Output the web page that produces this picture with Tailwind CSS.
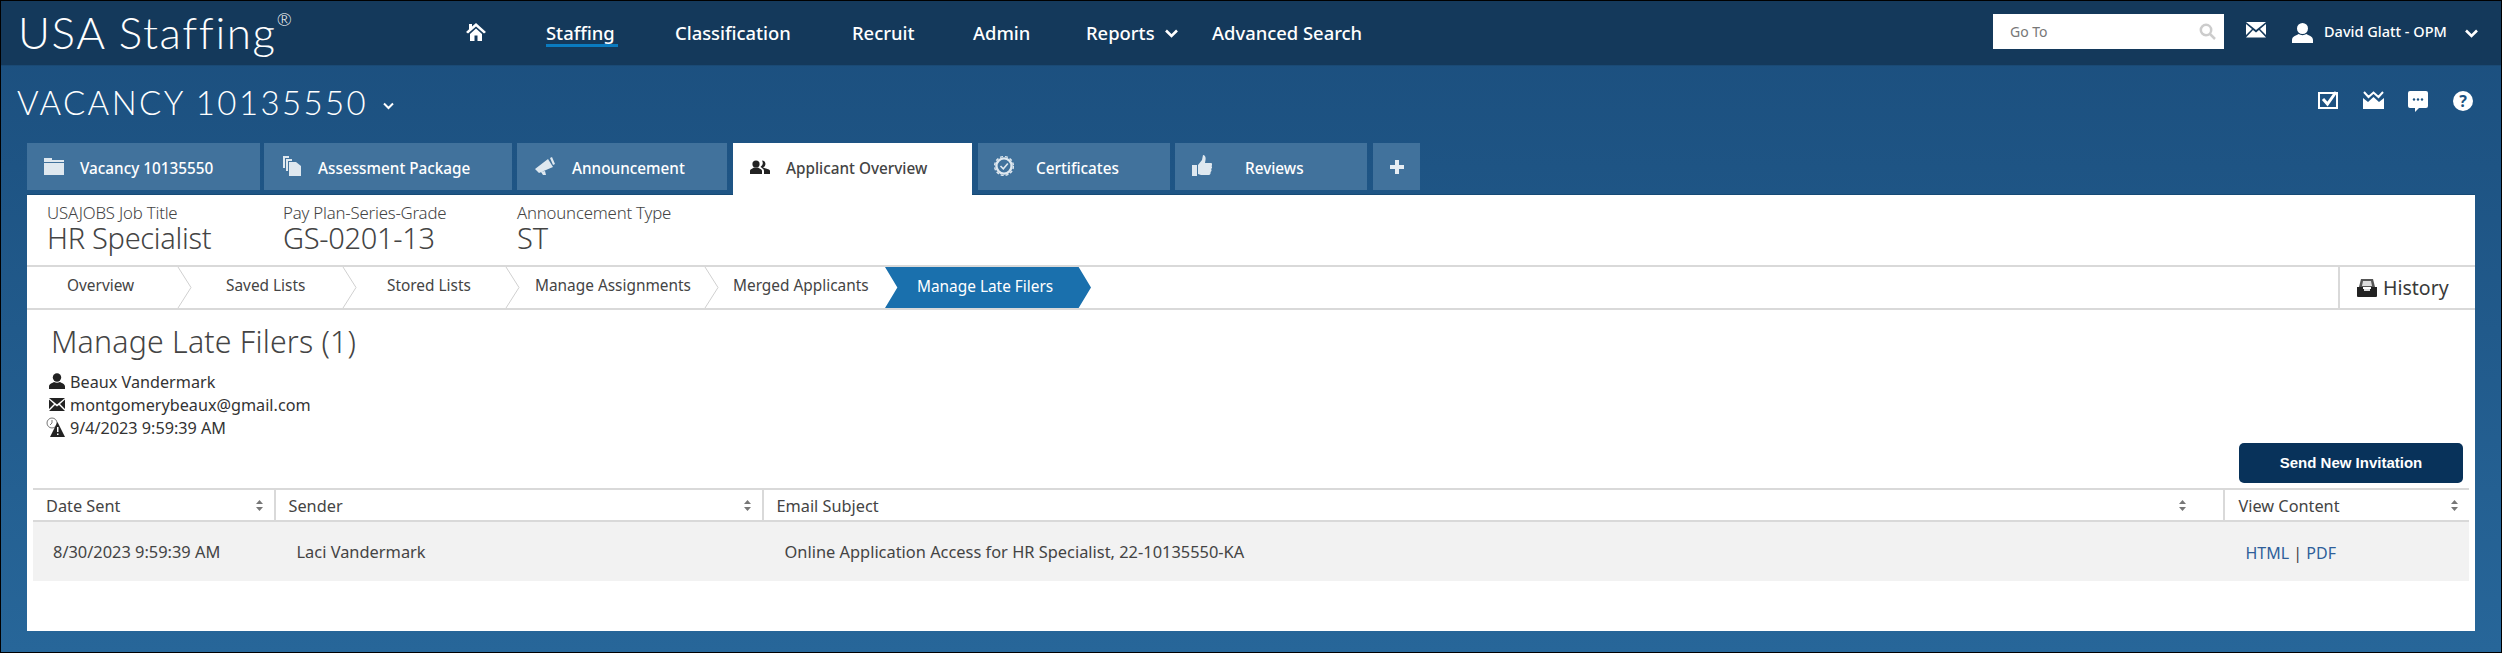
<!DOCTYPE html>
<html lang="en">
  <head>
    <meta charset="UTF-8" />
    <title>Manage Late Filers</title>
    <script src="https://cdn.jsdelivr.net/npm/@tailwindcss/browser@4"></script>
  </head>
  <body class="bg-black overflow-hidden font-['Noto_Sans','Open_Sans',sans-serif] text-[#444]">
    <div class="w-[2502px] h-[653px] border border-black flex flex-col bg-linear-to-b from-[#1b4e7d] to-[#276699]">
      <!-- top nav -->
      <header class="h-[65px] shrink-0 flex items-center bg-[#14395b] border-b border-[#1a4a75] text-white text-[18.4px] font-medium">
        <div class="ml-[17px] w-[448px] text-[44px] leading-none font-['Lato',sans-serif] font-light tracking-[1.6px] -mt-[3px] whitespace-nowrap">USA Staffing<sup class="text-[18px] align-[14px]">®</sup></div>
        <svg class="w-[20px] h-[18px] -mt-[3px]" viewBox="0 0 20 18" fill="#fff"><path d="M10 0 L20 9 L18 10.5 L10 3.5 L2 10.5 L0 9 L3 6.3 V1 H6 V3.6 Z M4 11 L10 5.6 L16 11 V18 H11.5 V12.5 H8.5 V18 H4 Z"/></svg>
        <div class="ml-[60px] w-[72px] relative -mt-[1px]">Staffing<span class="absolute left-0 top-[25px] w-[72px] h-[3px] bg-[#0a7bc0]"></span></div>
        <div class="ml-[57px] w-[119px] -mt-[1px]">Classification</div>
        <div class="ml-[58px] w-[64px] -mt-[1px]">Recruit</div>
        <div class="ml-[57px] w-[55px] -mt-[1px]">Admin</div>
        <div class="ml-[58px] w-[69px] -mt-[1px]">Reports</div>
        <svg class="ml-[10px] w-[13px] h-[9px]" viewBox="0 0 13 9" fill="none" stroke="#fff" stroke-width="2.6"><path d="M1 1.5 L6.5 7 L12 1.5"/></svg>
        <div class="ml-[34px] w-[150px] -mt-[1px] whitespace-nowrap">Advanced Search</div>
        <div class="ml-[631px] w-[231px] h-[35px] -mt-[3px] bg-white flex items-center justify-between pl-[17px] pr-[8px] text-[14px] font-normal text-[#777]">
          <span>Go To</span>
          <svg class="w-[17px] h-[17px]" viewBox="0 0 17 17" fill="none" stroke="#ccc" stroke-width="2.5"><circle cx="7" cy="7" r="5.2"/><path d="M11 11 L16 16"/></svg>
        </div>
        <svg class="ml-[22px] w-[20px] h-[16px] -mt-[7px]" viewBox="0 0 20 16" fill="#fff"><path d="M0 0 H20 L10 8 Z M0 2 L6 7 L0 13 Z M20 2 L14 7 L20 13 Z M7 8 L10 10.4 L13 8 L20 15.5 H0 Z"/></svg>
        <svg class="ml-[26px] w-[21px] h-[20px] -mt-[1px]" viewBox="0 0 21 20" fill="#fff"><ellipse cx="10.5" cy="5.5" rx="5.5" ry="5.5"/><path d="M0 20 V17 C0 13 5 12.5 6.5 11 C9 12.5 12 12.5 14.5 11 C16 12.5 21 13 21 17 V20 Z"/></svg>
        <div class="ml-[11px] w-[130px] -mt-[2px] text-[14.5px] whitespace-nowrap">David Glatt - OPM</div>
        <svg class="ml-[11px] w-[13px] h-[9px]" viewBox="0 0 13 9" fill="none" stroke="#fff" stroke-width="2.6"><path d="M1 1.5 L6.5 7 L12 1.5"/></svg>
      </header>

      <!-- vacancy title row -->
      <div class="h-[77px] shrink-0 flex items-start text-white">
        <h1 class="ml-[16px] mt-[14px] text-[33px] leading-[44px] font-['Lato',sans-serif] font-light tracking-[2.4px] whitespace-nowrap w-[349px]">VACANCY 10135550</h1>
        <svg class="ml-[17px] mt-[36px] w-[11px] h-[8px]" viewBox="0 0 11 8" fill="none" stroke="#fff" stroke-width="2"><path d="M1 1.5 L5.5 6 L10 1.5"/></svg>
        <svg class="ml-[1924px] mt-[25px] w-[21px] h-[18px]" viewBox="0 0 21 18" fill="none" stroke="#fff" stroke-width="2"><path d="M1 2 H19 V17 H1 Z"/><path d="M5 8 L9.5 13 L18 1" stroke-width="3"/></svg>
        <svg class="ml-[24px] mt-[25px] w-[21px] h-[18px]" viewBox="0 0 21 18" fill="#fff"><path d="M0 7 L5 11 L10.5 6 L16 11 L21 7 V18 H0 Z"/><path d="M1 1 L5.5 6 L10.5 1.5 L15.5 6 L20 1" fill="none" stroke="#fff" stroke-width="2"/></svg>
        <svg class="ml-[24px] mt-[25px] w-[20px] h-[22px]" viewBox="0 0 20 22" fill="#fff"><path d="M2 0 H18 A2 2 0 0 1 20 2 V15 A2 2 0 0 1 18 17 H11 L7 21 V17 H2 A2 2 0 0 1 0 15 V2 A2 2 0 0 1 2 0 Z"/><g fill="#1c5381"><circle cx="6" cy="8.5" r="1.2"/><circle cx="10" cy="8.5" r="1.2"/><circle cx="14" cy="8.5" r="1.2"/></g></svg>
        <div class="ml-[25px] mt-[25px] w-[20px] h-[20px] rounded-full bg-white text-[#1c5381] text-[16px] leading-[20px] font-bold text-center">?</div>
      </div>

      <!-- tabs -->
      <div class="h-[52px] shrink-0 flex items-stretch ml-[26px] w-[2448px] border-b border-[#164a75] text-[15.3px] font-medium text-white">
        <div class="w-[233px] h-[47px] bg-[#41729c] flex items-center pl-[17px] pt-[3px]">
          <svg class="w-[20px] h-[18px] -mt-[4px]" viewBox="0 0 20 18" fill="#dfe8ef"><path d="M0 1 H8 V3 H20 V5 H0 Z M0 6 H20 V18 H0 Z"/></svg>
          <span class="ml-[16px]">Vacancy 10135550</span>
        </div>
        <div class="ml-[4px] w-[248px] h-[47px] bg-[#41729c] flex items-center pl-[19px] pt-[3px]">
          <svg class="w-[18px] h-[20px] -mt-[4px]" viewBox="0 0 18 20" fill="#dfe8ef"><path d="M0 0 H6 V2 H2 V12 H0 Z M3 3 H9 V5 H5 V15 H3 Z M6 6 H13 L18 10 V20 H6 Z"/></svg>
          <span class="ml-[17px]">Assessment Package</span>
        </div>
        <div class="ml-[5px] w-[210px] h-[47px] bg-[#41729c] flex items-center pl-[18px] pt-[3px]">
          <svg class="w-[20px] h-[18px] -mt-[4px]" viewBox="0 0 20 18" fill="#dfe8ef"><path d="M0 12 L13 2 L18 10 L4 16 Z M6 15 L10 14 L11 18 L8 18 Z M15 1 L17 0 L20 7 L18 8 Z"/></svg>
          <span class="ml-[17px]">Announcement</span>
        </div>
        <div class="ml-[6px] w-[239px] h-[52px] -mb-px bg-white flex items-center pl-[17px] pb-[2px] text-[#444] z-10">
          <svg class="w-[20px] h-[14px] -mt-[2px]" viewBox="0 0 20 14" fill="#222"><circle cx="6" cy="4" r="3.6"/><path d="M0 14 V11 C0 9 3 8.5 4 7.5 H8 C9 8.5 12 9 12 11 V14 Z"/><path d="M12 0.5 A3.6 3.6 0 0 1 13 7.5 C15 8.5 20 9 20 11 V14 H14 V11 C14 9 12 8 10.5 7 A5 5 0 0 0 12 0.5 Z"/></svg>
          <span class="ml-[16px]">Applicant Overview</span>
        </div>
        <div class="ml-[6px] w-[192px] h-[47px] bg-[#41729c] flex items-center pl-[16px] pt-[3px]">
          <svg class="w-[20px] h-[22px] -mt-[4px]" viewBox="0 0 20 22" fill="none" stroke="#dfe8ef"><circle cx="10" cy="11" r="7.6" stroke-width="2.4"/><circle cx="10" cy="11" r="9.4" stroke-width="1.4" stroke-dasharray="3 2"/><path d="M6.5 11 L9.3 13.8 L13.8 8.5" stroke-width="1.6"/></svg>
          <span class="ml-[22px]">Certificates</span>
        </div>
        <div class="ml-[5px] w-[192px] h-[47px] bg-[#41729c] flex items-center pl-[17px] pt-[3px]">
          <svg class="w-[20px] h-[22px] -mt-[4px]" viewBox="0 0 20 22" fill="#dfe8ef"><path d="M0 10 H5 V21 H0 Z M6 10 L10 5 L11 0 C13 0 14 2 13.5 5 L13 8 H19 C20.5 8 20.5 10 19.5 11 C20.5 12 20 13.5 19 14 C20 15 19.5 16.5 18.5 17 C19 18.5 18 20 17 20 H9 L6 19 Z"/></svg>
          <span class="ml-[33px]">Reviews</span>
        </div>
        <div class="ml-[6px] w-[47px] h-[47px] bg-[#41729c] flex items-center justify-center">
          <svg class="w-[14px] h-[14px]" viewBox="0 0 14 14" fill="#e6edf3"><path d="M5 0 H9 V5 H14 V9 H9 V14 H5 V9 H0 V5 H5 Z"/></svg>
        </div>
      </div>

      <!-- white panel -->
      <main class="ml-[26px] w-[2448px] h-[436px] shrink-0 bg-white flex flex-col">
        <div class="h-[70px] shrink-0 flex pl-[20px] pt-[7px]">
          <div class="w-[236px]"><p class="text-[16.8px] leading-[21px] font-light tracking-[-0.2px]">USAJOBS Job Title</p><p class="text-[29px] leading-[30px] font-light tracking-[-0.3px]">HR Specialist</p></div>
          <div class="w-[234px]"><p class="text-[16.8px] leading-[21px] font-light tracking-[-0.2px]">Pay Plan-Series-Grade</p><p class="text-[29px] leading-[30px] font-light tracking-[-0.3px]">GS-0201-13</p></div>
          <div><p class="text-[16.8px] leading-[21px] font-light tracking-[-0.2px]">Announcement Type</p><p class="text-[29px] leading-[30px] font-light">ST</p></div>
        </div>

        <!-- breadcrumb steps -->
        <div class="h-[45px] shrink-0 border-y-2 border-[#d9d9d9] flex items-center text-[15.4px] relative">
          <span class="absolute left-[40px] top-[7px]">Overview</span>
          <svg class="absolute left-[150px] top-0 w-[15px] h-[41px]" viewBox="0 0 15 41" fill="none" stroke="#d0d0d0"><path d="M1 0 L14 20.5 L1 41"/></svg>
          <span class="absolute left-[199px] top-[7px]">Saved Lists</span>
          <svg class="absolute left-[315px] top-0 w-[15px] h-[41px]" viewBox="0 0 15 41" fill="none" stroke="#d0d0d0"><path d="M1 0 L14 20.5 L1 41"/></svg>
          <span class="absolute left-[360px] top-[7px]">Stored Lists</span>
          <svg class="absolute left-[478px] top-0 w-[15px] h-[41px]" viewBox="0 0 15 41" fill="none" stroke="#d0d0d0"><path d="M1 0 L14 20.5 L1 41"/></svg>
          <span class="absolute left-[508px] top-[7px]">Manage Assignments</span>
          <svg class="absolute left-[677px] top-0 w-[15px] h-[41px]" viewBox="0 0 15 41" fill="none" stroke="#d0d0d0"><path d="M1 0 L14 20.5 L1 41"/></svg>
          <span class="absolute left-[706px] top-[7px]">Merged Applicants</span>
          <div class="absolute left-[858px] top-0 w-[206px] h-[41px] bg-[#1a70ad] text-white flex items-center pl-[32px] pb-[2px] [clip-path:polygon(0_0,94%_0,100%_50%,94%_100%,0_100%,6%_50%)]">Manage Late Filers</div>
          <div class="ml-auto w-[137px] h-full border-l-2 border-[#d9d9d9] flex items-center pl-[17px] gap-[6px] text-[19.5px] text-[#3a3a3a]">
            <svg class="w-[20px] h-[19px]" viewBox="0 0 20 19"><path d="M4 1 H16 L18 9 H2 Z" fill="#555"/><path d="M6 3 H14 L15 8 H5 Z" fill="#ddd"/><path d="M0 9 H6 V11 H14 V9 H20 V18 A1 1 0 0 1 19 19 H1 A1 1 0 0 1 0 18 Z" fill="#222"/><path d="M7 11 H13 V13 H7 Z" fill="#ddd"/></svg>
            <span>History</span>
          </div>
        </div>

        <div class="relative h-[178px] shrink-0 pl-[24px] pt-[14px]">
          <h2 class="text-[30.3px] leading-[36px] font-light tracking-[0.2px]">Manage Late Filers (1)</h2>
          <div class="mt-[11px] flex flex-col text-[16.2px] leading-[23px] text-[#333]">
            <div class="flex items-center gap-[5px] -ml-[2px]">
              <svg class="w-[16px] h-[16px] -mt-[4px]" viewBox="0 0 16 16" fill="#222"><circle cx="8" cy="4.5" r="4.2"/><path d="M0 16 V13.5 C0 10.5 4 10 5 9 C7 10 9 10 11 9 C12 10 16 10.5 16 13.5 V16 Z"/></svg>
              <span>Beaux Vandermark</span>
            </div>
            <div class="flex items-center gap-[5px] -ml-[2px]">
              <svg class="w-[16px] h-[13px] -mt-[3px]" viewBox="0 0 16 13" fill="#222"><path d="M0 0 H16 L8 6.5 Z M0 1.5 L5 6 L0 11 Z M16 1.5 L11 6 L16 11 Z M6 7 L8 8.6 L10 7 L16 13 H0 Z"/></svg>
              <span>montgomerybeaux@gmail.com</span>
            </div>
            <div class="flex items-center gap-[4px] -ml-[6px]">
              <svg class="w-[21px] h-[21px] -mt-[2px]" viewBox="0 0 21 21"><circle cx="7" cy="6" r="5" fill="#fff" stroke="#777" stroke-width="1"/><path d="M7 3 V6 L5 8" fill="none" stroke="#777"/><path d="M12.5 5 L20 20 H5 Z" fill="#222"/><path d="M12 10 H13.5 V15 H12 Z M12 16.5 H13.5 V18 H12 Z" fill="#fff"/></svg>
              <span>9/4/2023 9:59:39 AM</span>
            </div>
          </div>
          <button class="absolute left-[2212px] top-[133px] w-[224px] h-[40px] rounded-[5px] bg-[#08325a] text-white text-[15px] font-bold font-['Liberation_Sans',sans-serif]">Send New Invitation</button>
        </div>

        <!-- table -->
        <div class="ml-[6px] w-[2436px] shrink-0">
          <div class="h-[34px] grid grid-cols-[242.5px_488px_1461px_244.5px] border-y-2 border-[#d9d9d9] text-[16.3px] leading-[32px]">
            <div class="relative pl-[13px] border-r-2 border-[#d9d9d9]">Date Sent<svg class="absolute right-[11px] top-[10px] w-[7px] h-[11px]" viewBox="0 0 7 11" fill="#777"><path d="M3.5 0 L7 4 H0 Z M0 7 H7 L3.5 11 Z"/></svg></div>
            <div class="relative pl-[13px] border-r-2 border-[#d9d9d9]">Sender<svg class="absolute right-[11px] top-[10px] w-[7px] h-[11px]" viewBox="0 0 7 11" fill="#777"><path d="M3.5 0 L7 4 H0 Z M0 7 H7 L3.5 11 Z"/></svg></div>
            <div class="relative pl-[13px] border-r-2 border-[#d9d9d9]">Email Subject<svg class="absolute right-[37px] top-[10px] w-[7px] h-[11px]" viewBox="0 0 7 11" fill="#777"><path d="M3.5 0 L7 4 H0 Z M0 7 H7 L3.5 11 Z"/></svg></div>
            <div class="relative pl-[14px]">View Content<svg class="absolute right-[11px] top-[10px] w-[7px] h-[11px]" viewBox="0 0 7 11" fill="#777"><path d="M3.5 0 L7 4 H0 Z M0 7 H7 L3.5 11 Z"/></svg></div>
          </div>
          <div class="h-[59px] grid grid-cols-[242.5px_488px_1461px_244.5px] items-center bg-[#f2f2f2] text-[16.4px] pt-[2px]">
            <div class="pl-[20px]">8/30/2023 9:59:39 AM</div>
            <div class="pl-[21px]">Laci Vandermark</div>
            <div class="pl-[21px]">Online Application Access for HR Specialist, 22-10135550-KA</div>
            <div class="pl-[21px] text-[16px]"><a class="text-[#2f5f9a]">HTML</a> | <a class="text-[#2f5f9a]">PDF</a></div>
          </div>
        </div>
      </main>
    </div>
  </body>
</html>
